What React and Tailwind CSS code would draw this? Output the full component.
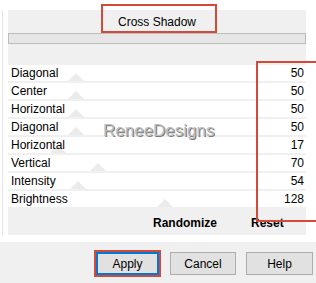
const rows = [
  { label: "Diagonal", value: 50, tri: 60 },
  { label: "Center", value: 50, tri: 60 },
  { label: "Horizontal", value: 50, tri: 60 },
  { label: "Diagonal", value: 50, tri: 60 },
  { label: "Horizontal", value: 17, tri: 42 },
  { label: "Vertical", value: 70, tri: 82 },
  { label: "Intensity", value: 54, tri: 62 },
  { label: "Brightness", value: 128, tri: 149 },
];

function Triangle({ left }) {
  return (
    <div
      className="absolute bottom-0 w-0 h-0 border-l-[8px] border-r-[8px] border-b-[8px] border-l-transparent border-r-transparent border-b-[#ebebeb]"
      style={{ left }}
    />
  );
}

export default function App() {
  return (
    <div className="relative w-[316px] h-[283px] overflow-hidden bg-[#f0f0f0] text-[12px] text-black font-['Liberation_Sans',Arial,sans-serif]">
      {/* filter panel */}
      <div className="flex bg-white pt-[10px] h-[235px]">
        <div className="w-[8px] flex">
          <div className="ml-[2px] w-px bg-[#e4e4e4]" />
        </div>
        <div className="relative w-[298px] bg-[#f0f0f0] flex flex-col">
          <div className="h-[23px] flex items-center justify-center">Cross Shadow</div>
          <div className="h-[11px] border border-[#bcbcbc] bg-[#e6e6e6]" />
          <div className="mt-[21px] flex flex-col gap-[2px]">
            {rows.map((r, i) => (
              <div key={i} className="relative h-[16px] bg-white flex items-center justify-between pl-[3px] pr-[2px]">
                <Triangle left={r.tri} />
                <span className="relative">{r.label}</span>
                <span className="relative">{r.value}</span>
              </div>
            ))}
          </div>
          <div className="mt-[7px] flex font-bold">
            <span className="ml-[145px]">Randomize</span>
            <span className="ml-[34px]">Reset</span>
          </div>
          {/* watermark */}
          <div className="absolute left-[95px] top-[108px] text-[17px] text-[#bdbdbd] [text-shadow:1px_1px_0_#7a7a7a]">
            ReneeDesigns
          </div>
        </div>
        <div className="flex-1 bg-white" />
      </div>
      <div className="h-[7px] bg-white" />

      {/* buttons */}
      <div className="flex items-center pl-[94px] pt-[8px] gap-[9px]">
        <button className="w-[67px] h-[27px] border-2 border-[#d24a38] p-0 bg-[#e1e1e1]">
          <div className="h-full border-2 border-[#0078d7] flex items-center justify-center">Apply</div>
        </button>
        <button className="w-[66px] h-[23px] border border-[#adadad] bg-[#e1e1e1]">Cancel</button>
        <button className="ml-[1px] w-[67px] h-[23px] border border-[#adadad] bg-[#e1e1e1]">Help</button>
      </div>

      {/* highlight boxes */}
      <div className="absolute left-[101px] top-[4px] w-[116px] h-[29px] border-2 border-[#d24a38]" />
      <div className="absolute left-[256px] top-[61px] w-[80px] h-[161px] border-2 border-[#d24a38]" />
    </div>
  );
}
